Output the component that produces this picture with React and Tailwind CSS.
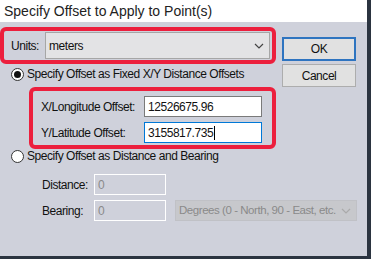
import React from 'react'

function Radio({ checked }) {
    return (
        <span className="w-[13px] h-[13px] rounded-full border border-[#333] bg-white flex items-center justify-center shrink-0">
            {checked && <span className="w-[7px] h-[7px] rounded-full bg-[#111]" />}
        </span>
    )
}

function Chevron({ color }) {
    return (
        <svg width="10" height="6" viewBox="0 0 10 6" className="shrink-0">
            <path d="M1 1 L5 5 L9 1" fill="none" stroke={color} strokeWidth="1.2" />
        </svg>
    )
}

export default function App() {
    return (
        <div
            className="w-[371px] h-[259px] bg-[#2b3440] overflow-hidden text-[12px] tracking-[-0.45px] text-[#111]"
            style={{ fontFamily: '"Liberation Sans", Arial, sans-serif' }}
        >
            <div className="w-[367px] h-[256px] bg-[#cfd1db] flex flex-col">
                {/* Title bar */}
                <div className="h-[22px] bg-white flex items-center pl-[4px] text-[14px] tracking-normal text-[#222]">
                    Specify Offset to Apply to Point(s)
                </div>

                {/* Top row */}
                <div className="flex mt-[5px]">
                    <div className="w-[276px] flex flex-col">
                        <div className="h-[37px] border-[4px] border-[#ec1f3d] rounded-[6px] flex items-center pl-[7px] pr-[2px]">
                            <span className="w-[34px]">Units:</span>
                            <div className="flex-1 h-[27px] bg-[#e3e3e5] border border-[#a6a6a6] flex items-center justify-between pl-[3px] pr-[5px]">
                                <span>meters</span>
                                <Chevron color="#444" />
                            </div>
                        </div>
                        <div className="h-[20px] flex items-center gap-[3px] pl-[11px]">
                            <Radio checked />
                            <span>Specify Offset as Fixed X/Y Distance Offsets</span>
                        </div>
                    </div>
                    <div className="flex flex-col gap-[3px] ml-[6px] mt-[10px]">
                        <button className="w-[74px] h-[24px] bg-[#e1e1e1] border-2 border-[#2e74c0] flex items-center justify-center">
                            OK
                        </button>
                        <button className="w-[74px] h-[23px] bg-[#e1e1e1] border border-[#adadad] flex items-center justify-center">
                            Cancel
                        </button>
                    </div>
                </div>

                {/* Fixed X/Y offsets */}
                <div className="ml-[29px] w-[247px] h-[62px] border-[4px] border-[#ec1f3d] rounded-[6px] flex flex-col gap-[5px] pt-[5px] pl-[8px]">
                    <div className="flex items-center">
                        <span className="w-[103px]">X/Longitude Offset:</span>
                        <div className="w-[118px] h-[21px] bg-white border border-[#7a7a7a] flex items-center pl-[3px]">
                            12526675.96
                        </div>
                    </div>
                    <div className="flex items-center">
                        <span className="w-[103px]">Y/Latitude Offset:</span>
                        <div className="w-[118px] h-[21px] bg-white border border-[#0078d7] flex items-center pl-[3px]">
                            3155817.735
                            <span className="w-px h-[14px] bg-black ml-px" />
                        </div>
                    </div>
                </div>

                {/* Distance and bearing */}
                <div className="h-[14px] flex items-center gap-[3px] pl-[11px]">
                    <Radio />
                    <span>Specify Offset as Distance and Bearing</span>
                </div>
                <div className="flex flex-col gap-[5px] mt-[11px] pl-[42px]">
                    <div className="flex items-center">
                        <span className="w-[52px]">Distance:</span>
                        <div className="w-[72px] h-[21px] border border-white flex items-center pl-[3px] text-[#8a8a8a]">
                            0
                        </div>
                    </div>
                    <div className="flex items-center">
                        <span className="w-[52px]">Bearing:</span>
                        <div className="w-[72px] h-[21px] border border-white flex items-center pl-[3px] text-[#8a8a8a]">
                            0
                        </div>
                        <div className="ml-[9px] w-[182px] h-[21px] bg-[#c7c8cc] border border-[#c0c1c6] flex items-center gap-[4px] pl-[3px] pr-[5px] text-[#8a8a8a]">
                            <span className="flex-1 min-w-0 overflow-hidden whitespace-nowrap text-[11.5px]">Degrees (0 - North, 90 - East, etc.</span>
                            <Chevron color="#aaa" />
                        </div>
                    </div>
                </div>
            </div>
        </div>
    )
}
